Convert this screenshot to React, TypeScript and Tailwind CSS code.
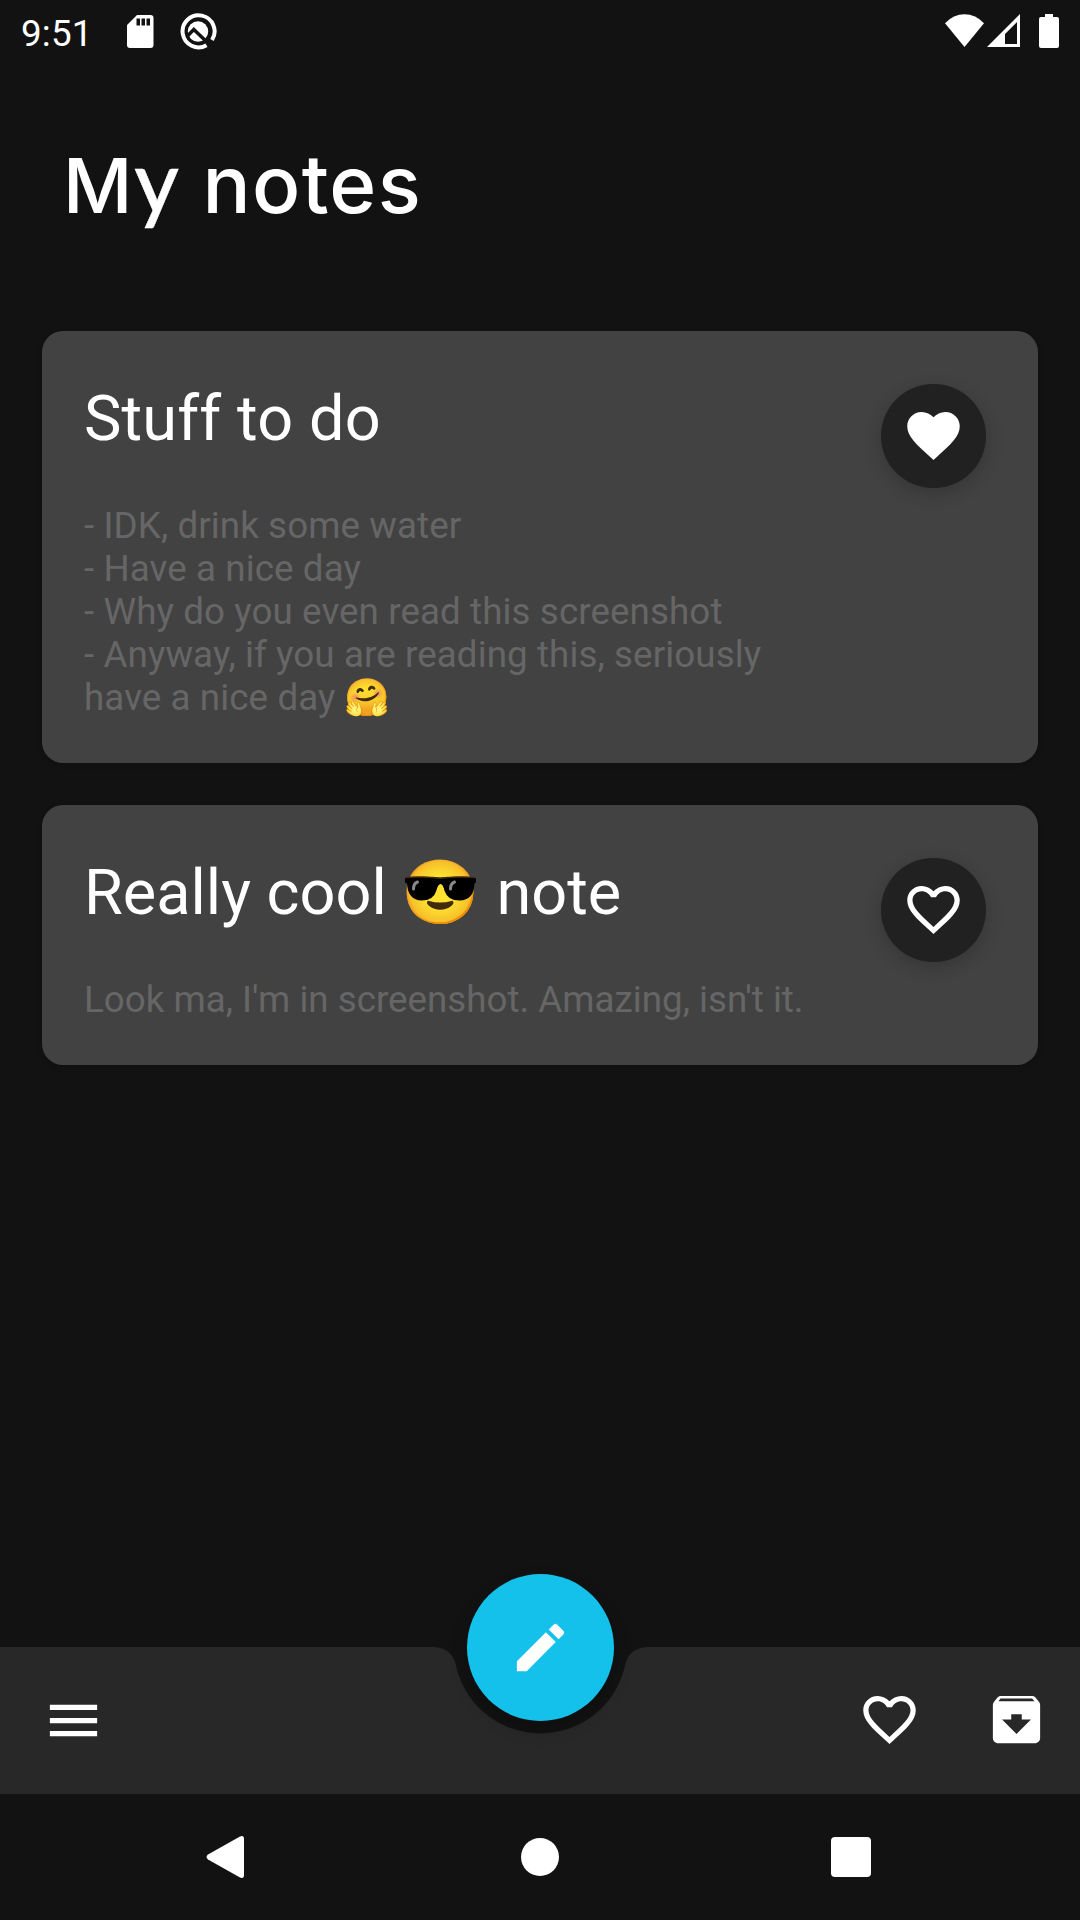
import type { ReactNode } from "react";
import { MdArchive, MdEdit, MdFavorite, MdFavoriteBorder, MdMenu } from "react-icons/md";

function StatusBar() {
  return (
    <header className="flex h-[63px] items-start text-white">
      <span className="ml-[21px] mt-3 w-[106px] text-[36.75px] leading-[43px] tracking-[0.2px]">9:51</span>
      <svg className="mt-[15px] h-[33px] w-[27px]" viewBox="0 0 27 33" fill="currentColor">
        <path
          fillRule="evenodd"
          d="M10 0H23.5Q26.5 0 26.5 3V30Q26.5 33 23.5 33H3Q0 33 0 30V10ZM9.5 3.5V10.5H13V3.5ZM14.5 3.5V10.5H18V3.5ZM19.5 3.5V10.5H23V3.5Z"
        />
      </svg>
      <svg className="ml-[26px] mt-[13px] h-[37px] w-[37px]" viewBox="0 0 37 37" fill="none">
        <path d="M26.500 32.200A16 16 0 1 1 32 27" stroke="white" strokeWidth="4" />
        <circle cx="18" cy="18.500" r="10.2" fill="white" />
        <path d="M7 23.500L13.800 16.500L30.500 32.500" stroke="#121212" strokeWidth="3.4" />
      </svg>
      <svg className="ml-auto mt-[14px] h-[33px] w-[39px]" viewBox="0 0 39 33" fill="currentColor">
        <path d="M0 9.2Q8.500 .3 19.500 .3Q30.500 .3 39 9.200L19.500 33Z" />
      </svg>
      <svg className="ml-[3px] mt-[14px] h-[33px] w-[33px]" viewBox="0 0 33 33" fill="currentColor">
        <path fillRule="evenodd" d="M33 0V33H0ZM30 8L18 20V30H30Z" />
      </svg>
      <svg className="ml-[19px] mr-[21px] mt-[14px] h-[34px] w-5" viewBox="0 0 20 34" fill="currentColor">
        <path d="M6 0H14V3H18Q20 3 20 5V32Q20 34 18 34H2Q0 34 0 32V5Q0 3 2 3H6Z" />
      </svg>
    </header>
  );
}

function SunglassesFace() {
  return (
    <span className="relative -left-px inline-block leading-[74px]">
      😎
      <svg className="absolute left-1 top-[21px] h-6 w-[71px]" viewBox="0 0 71 24">
        <path d="M0 1.200Q17 0 35.500 2Q54 0 71 1.200V5.500L69.500 6.500Q69 23 54.500 23.500Q42.500 23.500 39.800 14Q38 7 35.500 7Q33 7 31.200 14Q28.500 23.500 16.500 23.500Q3 23 2 6.500L0 5.500Z" />
        <path d="M8.500 12Q8.500 6.500 12.500 5M45.500 12Q45.500 6.500 49.500 5" fill="none" stroke="#8a8a8a" strokeWidth="3" strokeLinecap="round" />
      </svg>
    </span>
  );
}

function Note({ title, children, favorite = false }: { title: ReactNode; children: ReactNode; favorite?: boolean }) {
  const Icon = favorite ? MdFavorite : MdFavoriteBorder;
  return (
    <article className="flex justify-between rounded-[21px] bg-[#424242] pb-[44px] pl-[42px] pr-[52px] pt-[51px] shadow-[0_2px_5px_rgba(0,0,0,0.15)]">
      <div className="w-[735px]">
        <h2 className="h-[74px] whitespace-nowrap text-[63px] leading-[74px] text-white">{title}</h2>
        <p className="mt-12 whitespace-pre-line text-[36.75px] leading-[43px] text-[#666]">{children}</p>
      </div>
      <button className="mt-[2px] flex h-[104px] w-[105px] items-center justify-center rounded-full bg-[#212121] pb-px text-white shadow-[0_5px_18px_rgba(0,0,0,0.2)]">
        <Icon className="size-[63px]" />
      </button>
    </article>
  );
}

function BottomBar() {
  return (
    <nav className="relative h-[147px]">
      <svg className="absolute inset-0 h-[147px] w-[1080px]" viewBox="0 0 1080 147">
        <path
          fill="#282828"
          d="M0 0H434Q451 1 455.500 16A86.500 86.500 0 0 0 625.500 16Q630 1 647 0H1080V147H0Z"
        />
      </svg>
      <div className="relative flex h-[145px] items-center pl-[42px] pr-8 text-white">
        <MdMenu className="mt-px size-[63px]" />
        <MdFavoriteBorder className="ml-auto size-[63px]" />
        <MdArchive className="ml-16 size-[63px]" />
      </div>
      <button className="absolute -top-[73px] left-[467px] flex size-[147px] items-center justify-center rounded-full bg-[#14c1ea] text-white shadow-[0_8px_18px_rgba(0,0,0,0.2)]">
        <MdEdit className="size-[63px]" />
      </button>
    </nav>
  );
}

function SystemNav() {
  return (
    <footer className="flex h-[126px] items-center bg-[#121212] pl-[206px] text-white">
      <svg className="h-[42px] w-[39px]" viewBox="0 0 39 42" fill="currentColor">
        <path d="M2 18.500L34 .5Q38 -1 38 3V39Q38 43 34 41.500L2 23.500Q-1 21 2 18.500Z" />
      </svg>
      <div className="ml-[276px] size-[38px] rounded-full bg-white" />
      <div className="ml-[272px] size-10 rounded bg-white" />
    </footer>
  );
}

export default function App() {
  return (
    <div className="flex h-[1920px] w-[1080px] flex-col overflow-hidden bg-[#121212] font-[Roboto,'Noto_Color_Emoji',sans-serif]">
      <StatusBar />
      <h1 className="ml-[63px] mt-[74px] h-[194px] whitespace-nowrap font-[Inter,sans-serif] text-[76px] font-medium leading-[94px] text-white">
        M<span className="ml-[2px] font-[Lato,sans-serif] text-[86px] leading-none [-webkit-text-stroke:0.5px_white]">y</span>
        <span className="ml-px text-[80px] leading-none tracking-[1.3px]"> notes</span>
      </h1>
      <main className="flex flex-1 flex-col gap-[42px] px-[42px]">
        <Note title={<span className="tracking-[0.15px]">Stuff to do</span>} favorite>
          <span className="tracking-[0.09px]">
            {"- IDK, drink some water\n- Have a nice day\n- Why do you even read this screenshot\n- Anyway, if you are reading this, seriously have a nice day 🤗"}
          </span>
        </Note>
        <Note title={<>Really cool <SunglassesFace /> note</>}>Look ma, I'm in screenshot. Amazing, isn't it.</Note>
      </main>
      <BottomBar />
      <SystemNav />
    </div>
  );
}
